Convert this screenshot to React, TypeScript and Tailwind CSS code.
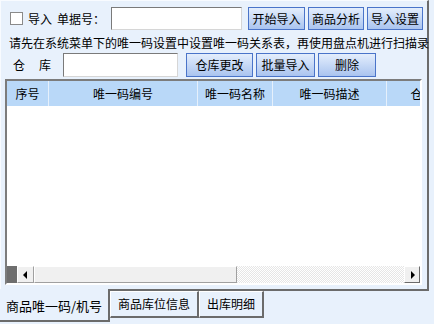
import React from "react"

const btn =
  "h-full flex items-center justify-center border border-[#4a74c9] bg-gradient-to-b from-[#e4eefc] to-[#aac4ef] text-[12px] text-black"

const cols = [
  { label: "序号", w: "w-[42px]" },
  { label: "唯一码编号", w: "w-[149px]" },
  { label: "唯一码名称", w: "w-[75px]" },
  { label: "唯一码描述", w: "w-[114px]" },
  { label: "仓库", w: "w-[72px]" },
]

export default function App() {
  return (
    <div
      className="w-[434px] h-[324px] bg-[#e8f1fc] overflow-hidden text-[12px] text-black"
      style={{ fontFamily: '"Noto Sans CJK SC", "Noto Sans", sans-serif' }}
    >
      {/* tab page */}
      <div className="w-[429px] h-[291px] border-r-2 border-b-2 border-r-[#6b6b6b] border-b-[#6b6b6b] border-t border-l border-t-[#f8fbff] border-l-[#f8fbff] pt-[6px]">
        {/* row 1 */}
        <div className="flex items-center h-[23px]">
          <div className="ml-[9px] w-[13px] h-[13px] border border-[#8a8a8a] bg-white" />
          <span className="ml-[5px]">导入</span>
          <span className="ml-[5px]">单据号：</span>
          <div className="ml-[6px] w-[131px] h-[23px] border border-[#7a7a7a] border-b-[#d6d6d6] border-r-[#d6d6d6] bg-white" />
          <div className="ml-[6px] flex gap-[3px] h-[23px]">
            <button className={`${btn} w-[57px]`}>开始导入</button>
            <button className={`${btn} w-[56px]`}>商品分析</button>
            <button className={`${btn} w-[56px]`}>导入设置</button>
          </div>
        </div>
        {/* hint */}
        <div className="mt-[5px] ml-[8px] h-[15px] leading-[15px] whitespace-nowrap">
          请先在系统菜单下的唯一码设置中设置唯一码关系表，再使用盘点机进行扫描录
        </div>
        {/* row 3 */}
        <div className="mt-[3px] flex items-center h-[24px]">
          <span className="ml-[12px]">仓</span>
          <span className="ml-[14px]">库</span>
          <div className="ml-[12px] w-[115px] h-[24px] border border-[#7a7a7a] border-b-[#d6d6d6] border-r-[#d6d6d6] bg-white" />
          <div className="ml-[8px] flex gap-[3px] h-[24px]">
            <button className={`${btn} w-[67px]`}>仓库更改</button>
            <button className={`${btn} w-[59px]`}>批量导入</button>
            <button className={`${btn} w-[58px]`}>删除</button>
          </div>
        </div>
        {/* grid */}
        <div className="mt-[2px] ml-[4px] w-[417px] h-[206px] border-2 border-t-[#7c7c7c] border-l-[#7c7c7c] border-r-white border-b-white bg-white flex flex-col overflow-hidden">
          <div className="flex h-[25px] bg-[#b9d8f8] shrink-0 overflow-hidden">
            {cols.map((c) => (
              <div
                key={c.label}
                className={`${c.w} shrink-0 h-full flex items-center justify-center border-r border-r-[#e6f0fb] whitespace-nowrap`}
              >
                {c.label}
              </div>
            ))}
          </div>
          <div className="flex-1" />
          {/* horizontal scrollbar */}
          <div className="flex h-[17px] shrink-0 bg-[#f0f0f0]">
            <div className="w-[10px] h-full bg-[#6e6e6e]" />
            <div className="w-[17px] h-full border border-[#a0a0a0] border-t-white border-l-white bg-[#f0f0f0] flex items-center justify-center">
              <svg width="5" height="8" viewBox="0 0 5 8">
                <path d="M4 0 L0 4 L4 8 Z" fill="#000" />
              </svg>
            </div>
            <div className="w-[203px] h-full border border-[#a0a0a0] border-t-white border-l-white bg-[#f0f0f0]" />
            <div className="flex-1 h-full bg-[repeating-conic-gradient(#ffffff_0_25%,#e6e6e6_0_50%)] bg-[length:2px_2px]" />
            <div className="w-[16px] h-full border border-[#6b6b6b] border-t-white border-l-white bg-[#f0f0f0] flex items-center justify-center">
              <svg width="5" height="8" viewBox="0 0 5 8">
                <path d="M1 0 L5 4 L1 8 Z" fill="#000" />
              </svg>
            </div>
          </div>
        </div>
      </div>
      {/* tabs */}
      <div className="flex items-start -mt-[2px]">
        <div className="w-[110px] h-[33px] bg-[#e8f1fc] border-r-2 border-r-[#6b6b6b] border-b-2 border-b-[#6b6b6b] flex items-center pl-[6px] text-[13px] leading-none pt-[2px]">
          商品唯一码/机号
        </div>
        <div className="mt-[2px] w-[89px] h-[27px] bg-[#e8f1fc] border border-l-white border-t-white border-r-2 border-r-[#6b6b6b] border-b-2 border-b-[#6b6b6b] flex items-center justify-center">
          商品库位信息
        </div>
        <div className="mt-[2px] w-[65px] h-[27px] bg-[#e8f1fc] border border-l-white border-t-white border-r-2 border-r-[#6b6b6b] border-b-2 border-b-[#6b6b6b] flex items-center justify-center">
          出库明细
        </div>
      </div>
    </div>
  )
}
